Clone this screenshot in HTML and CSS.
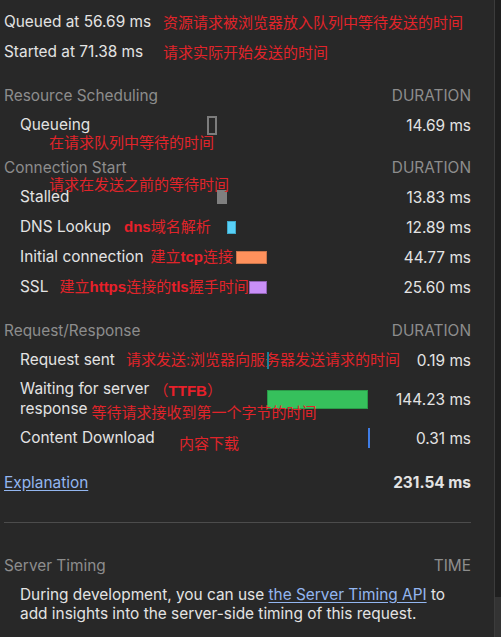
FILE: index.html
```html
<!DOCTYPE html>
<html lang="zh-CN">
<head>
<meta charset="utf-8">
<title>Timing</title>
<link rel="stylesheet" href="styles.css">
</head>
<body>
<div class="frame">
  <main class="panel">
    <div class="summary">
      <div class="summary-row"><span class="sum-label">Queued at 56.69 ms</span><span class="note">资源请求被浏览器放入队列中等待发送的时间</span></div>
      <div class="summary-row"><span class="sum-label">Started at 71.38 ms</span><span class="note">请求实际开始发送的时间</span></div>
    </div>

    <section class="group group-1">
      <div class="ghead"><span>Resource Scheduling</span><span>DURATION</span></div>
      <div class="trow">
        <div class="tlabel">Queueing</div>
        <div class="track"><span class="bar bar-queue" style="margin-left:0%;width:6.34%"></span></div>
        <div class="tval">14.69 ms</div>
        <span class="note note-float note-queue">在请求队列中等待的时间</span>
      </div>
    </section>

    <section class="group group-2">
      <div class="ghead"><span>Connection Start</span><span>DURATION</span></div>
      <div class="trow">
        <div class="tlabel">Stalled</div>
        <div class="track"><span class="bar bar-stalled" style="margin-left:6.34%;width:5.97%"></span></div>
        <div class="tval">13.83 ms</div>
        <span class="note note-float note-stalled">请求在发送之前的等待时间</span>
      </div>
      <div class="trow">
        <div class="tlabel">DNS Lookup<span class="note note-dns"><b>dns</b>域名解析</span></div>
        <div class="track"><span class="bar bar-dns" style="margin-left:12.32%;width:5.57%"></span></div>
        <div class="tval">12.89 ms</div>
      </div>
      <div class="trow">
        <div class="tlabel">Initial connection<span class="note note-tcp">建立<b>tcp</b>连接</span></div>
        <div class="track"><span class="bar bar-conn" style="margin-left:17.88%;width:19.34%"></span></div>
        <div class="tval">44.77 ms</div>
      </div>
      <div class="trow">
        <div class="tlabel">SSL<span class="note note-ssl">建立<b>https</b>连接的<b>tls</b>握手时间</span></div>
        <div class="track"><span class="bar bar-ssl" style="margin-left:26.16%;width:11.06%"></span></div>
        <div class="tval">25.60 ms</div>
      </div>
    </section>

    <section class="group group-3">
      <div class="ghead"><span>Request/Response</span><span>DURATION</span></div>
      <div class="trow">
        <div class="tlabel">Request sent<span class="note note-sent">请求发送:浏览器向服务器发送请求的时间</span></div>
        <div class="track"><span class="bar bar-thin bar-sent" style="margin-left:37.22%"></span></div>
        <div class="tval">0.19 ms</div>
      </div>
      <div class="trow trow-tall">
        <div class="tlabel tlabel-wrap">Waiting for server <span class="note note-ttfb">（<b>TTFB</b>）</span><br>response<span class="note note-first">等待请求接收到第一个字节的时间</span></div>
        <div class="track"><span class="bar bar-wait" style="margin-left:37.30%;width:62.29%"></span></div>
        <div class="tval">144.23 ms</div>
      </div>
      <div class="trow">
        <div class="tlabel">Content Download</div>
        <div class="track"><span class="bar bar-thin bar-download" style="margin-left:99.59%"></span></div>
        <div class="tval">0.31 ms</div>
        <span class="note note-float note-download">内容下载</span>
      </div>
    </section>

    <div class="total">
      <a class="link" href="#">Explanation</a>
      <span class="total-val">231.54 ms</span>
    </div>

    <div class="divider"></div>

    <section class="server">
      <div class="ghead"><span>Server Timing</span><span>TIME</span></div>
      <p class="server-text">During development, you can use <a class="link" href="#">the Server Timing API</a> to<br>add insights into the server-side timing of this request.</p>
    </section>
  </main>
  <div class="scrollbar"><div class="thumb"></div></div>
</div>
</body>
</html>
```

FILE: styles.css
```css
* { box-sizing: border-box; }

html, body {
  margin: 0;
  padding: 0;
  background: #282828;
}

body {
  font-family: "Inter", "Noto Sans CJK SC", sans-serif;
  font-size: 15.4px;
  color: #e3e3e3;
}

.frame {
  display: flex;
  height: 100vh;
  overflow: hidden;
}

.panel {
  flex: 0 0 494px;
  padding: 6px 23px 0 4px;
}

.scrollbar {
  flex: 0 0 7px;
  border-left: 1px solid #3c3c3c;
  background: #1f1f1f;
  display: flex;
  flex-direction: column;
  justify-content: flex-end;
}

.thumb {
  height: 40px;
  background: #333333;
}

/* annotations */
.note {
  font-family: "Liberation Sans", "Noto Sans CJK SC", sans-serif;
  font-size: 15px;
  color: #e0242a;
  white-space: nowrap;
}

.note b {
  font-weight: 700;
  color: #e8202a;
}

.note-float {
  position: absolute;
  line-height: 20px;
}

.note-queue { left: 45px; top: 23px; }
.note-stalled { left: 45px; top: -7px; }
.note-download { left: 175px; top: 11px; }

.note-dns { margin-left: 13px; }
.note-tcp { margin-left: 7px; }
.note-ssl { margin-left: 11px; }
.note-sent { margin-left: 11px; }
.note-ttfb {
  position: relative;
  top: 2px;
}
.note-first {
  position: relative;
  top: 4px;
  margin-left: 4px;
}

/* summary */
.summary-row {
  display: grid;
  grid-template-columns: 159px auto;
  align-items: center;
  height: 30px;
}

/* groups */
.group-1 { margin-top: 14px; }
.group-2 { margin-top: 12px; }
.group-3 { margin-top: 13px; }

.ghead {
  display: flex;
  justify-content: space-between;
  align-items: center;
  height: 30px;
  color: #8d8d8d;
}

.trow {
  position: relative;
  display: grid;
  grid-template-columns: 203px 162px 1fr;
  align-items: center;
  height: 30px;
}

.trow-tall {
  height: auto;
  padding: 4px 0 4px;
}

.tlabel {
  padding-left: 16px;
  white-space: nowrap;
  min-width: 0;
  line-height: 20px;
}

.track {
  display: flex;
  align-items: center;
  height: 100%;
}

.tval {
  text-align: right;
}

/* bars */
.bar {
  display: block;
  flex: 0 0 auto;
  height: 13px;
}

.bar-queue {
  height: 19px;
  border: 2px solid #7c7c7c;
}

.bar-stalled {
  height: 14px;
  background: #7f7f7f;
}

.bar-dns {
  background: #58d0f7;
  border: 1px solid #3fa9c9;
}

.bar-conn {
  background: #ff915c;
  border: 1px solid #c9744a;
}

.bar-ssl {
  background: #c98ff7;
  border: 1px solid #8f62b3;
}

.bar-thin {
  width: 2px;
}

.bar-sent {
  height: 17px;
  background: #1b7f98;
}

.bar-wait {
  height: 19px;
  background: #36c05c;
  border: 1px solid #2a9a48;
}

.bar-download {
  height: 20px;
  background: #3f7de6;
}

/* total */
.total {
  display: flex;
  justify-content: space-between;
  align-items: center;
  height: 30px;
  margin-top: 14px;
}

.total-val {
  font-weight: 700;
}

.link {
  color: #93b6f0;
  text-decoration: underline;
  text-underline-offset: 2px;
}

.divider {
  margin-top: 25px;
  border-top: 1px solid #4c4c4c;
}

.server {
  margin-top: 27px;
}

.server-text {
  margin: 5px 0 0;
  padding-left: 16px;
  line-height: 19px;
}
```
